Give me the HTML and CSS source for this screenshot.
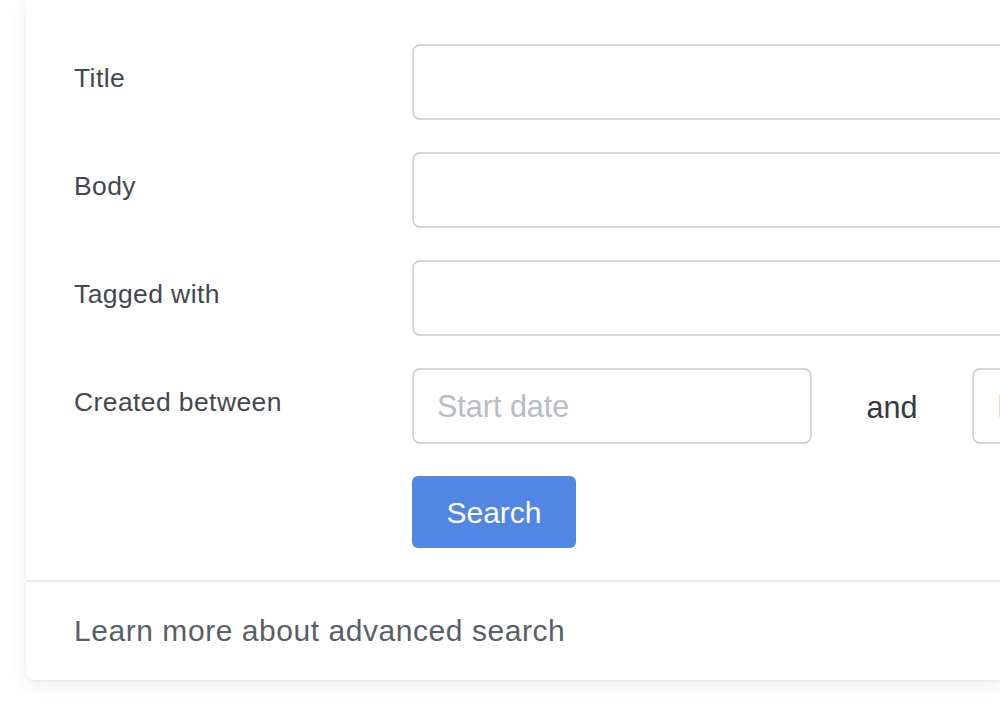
FILE: index.html
```html
<!DOCTYPE html>
<html lang="en">
<head>
<meta charset="utf-8">
<title>Advanced search</title>
<link rel="stylesheet" href="styles.css">
</head>
<body>
<div class="card">
  <form class="form">
    <div class="row">
      <label class="label">Title</label>
      <input class="input wide" type="text">
    </div>
    <div class="row">
      <label class="label">Body</label>
      <input class="input wide" type="text">
    </div>
    <div class="row">
      <label class="label">Tagged with</label>
      <input class="input wide" type="text">
    </div>
    <div class="row">
      <label class="label">Created between</label>
      <div class="dates">
        <input class="input date" type="text" placeholder="Start date">
        <span class="and">and</span>
        <input class="input date" type="text" placeholder="End date">
      </div>
    </div>
    <div class="row">
      <span class="label"></span>
      <button class="btn" type="button">Search</button>
    </div>
  </form>
  <div class="footer">Learn more about advanced search</div>
</div>
</body>
</html>
```

FILE: styles.css
```css
html, body {
  margin: 0;
  padding: 0;
  background: #ffffff;
  overflow: hidden;
  width: 1000px;
  height: 708px;
}

body {
  font-family: "Liberation Sans", Arial, sans-serif;
}

.card {
  margin-left: 26px;
  width: 974px;
  overflow: hidden;
  background: #ffffff;
  border-radius: 0 0 0 8px;
  box-shadow: 0 4px 18px rgba(40, 45, 70, 0.09), 0 1px 3px rgba(40, 45, 70, 0.05);
}

.form {
  display: flex;
  flex-direction: column;
  gap: 32px;
  padding: 44px 0 32px 48px;
  border-bottom: 2px solid #e8e8ed;
}

.row {
  display: flex;
  align-items: flex-start;
}

.label {
  width: 338px;
  flex: none;
  padding-top: 18px;
  font-size: 26.5px;
  letter-spacing: 0.4px;
  line-height: 32px;
  color: #43484f;
}

.input {
  box-sizing: border-box;
  flex: none;
  height: 76px;
  border: 2px solid #d3d6da;
  border-radius: 8px;
  background: #fff;
  padding: 0 23px;
  font-family: "Liberation Sans", Arial, sans-serif;
  font-size: 30.5px;
  color: #3b4047;
  outline: none;
  margin: 0;
}

.input::placeholder {
  color: #b8bcc2;
}

.wide {
  width: 960px;
}

.dates {
  display: flex;
  align-items: center;
  flex: none;
}

.date {
  width: 400px;
}

.and {
  width: 160px;
  text-align: center;
  font-size: 30.5px;
  color: #35393f;
  padding-top: 2px;
}

.btn {
  box-sizing: border-box;
  flex: none;
  width: 164px;
  height: 72px;
  border: none;
  border-radius: 6px;
  background: #5286e5;
  color: #ffffff;
  font-family: "Liberation Sans", Arial, sans-serif;
  font-size: 30px;
  padding: 2px 0 0;
}

.footer {
  height: 98px;
  display: flex;
  align-items: center;
  padding-left: 48px;
  font-size: 30px;
  letter-spacing: 0.55px;
  color: #5a5f66;
}
```
